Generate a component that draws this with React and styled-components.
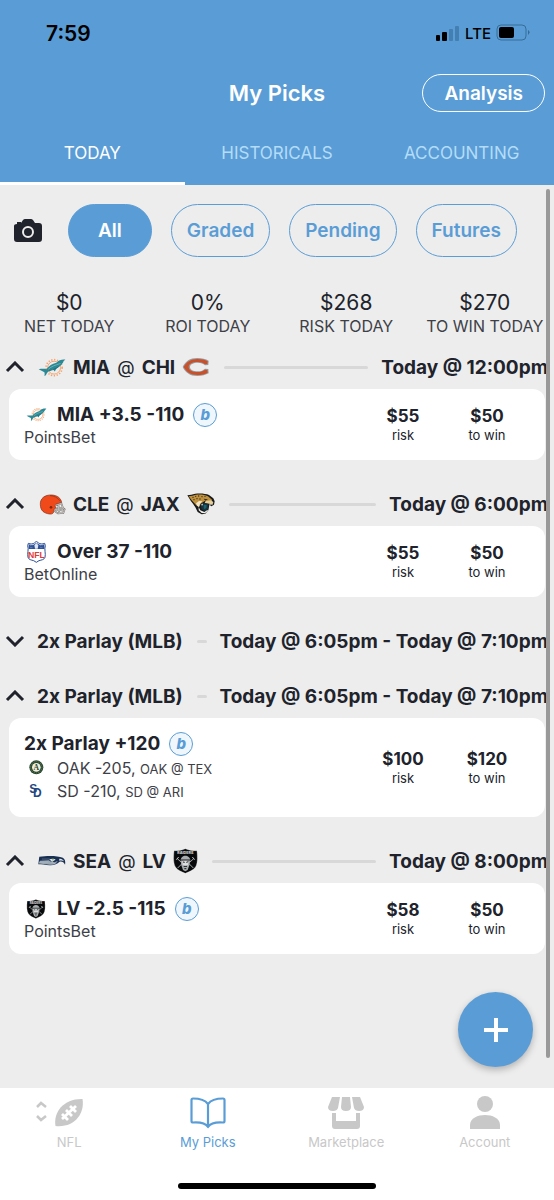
import { useState } from "react";
import styled, { createGlobalStyle, css } from "styled-components";

const GlobalStyle = createGlobalStyle`
  *, *::before, *::after {
    box-sizing: border-box;
  }

  body {
    margin: 0;
    background: #ededed;
    color: #20232b;
    font-family: Inter, "Liberation Sans", sans-serif;
  }

  button {
    font: inherit;
    color: inherit;
    background: none;
    border: 0;
    padding: 0;
    cursor: pointer;
  }

  svg {
    display: block;
    flex: none;
  }
`;

const blue = "#5a9dd6";

/* ---------- logos ---------- */

const Dolphins = ({ width = 28, height = 21 }) => (
  <svg width={width} height={height} viewBox="0 0 87 63" aria-hidden="true">
    <circle cx="50" cy="32" r="20" fill="none" stroke="#f3a26c" strokeWidth="3" />
    <circle cx="50" cy="32" r="25" fill="none" stroke="#f3a26c" strokeWidth="5" strokeDasharray="4 5" />
    <path d="M2 37c9-2 18-2 24 0 8-10 18-17 31-20 8-9 17-11 28-10-3 3-6 5-7 9-5 8-12 14-21 19l-5 9-5-6c-6 2-12 4-18 9-3 4-3 9-9 11 1-5 1-9 0-12-6-3-12-5-18-9z" fill="#2a8994" />
    <path d="M32 37c9-9 22-13 38-18" fill="none" stroke="#8fc8cc" strokeWidth="2" />
    <path d="M34 42c10-2 21-7 30-13" fill="none" stroke="#14606c" strokeWidth="2" />
  </svg>
);

const Bears = () => (
  <svg width="28" height="20" viewBox="0 0 84 60" aria-hidden="true">
    <path d="M2 30C10 13 24 3 46 3c14 0 25 3 34 8l-1 13-10 1c-5-5-12-8-21-8-15 0-24 5-24 13s9 13 24 13c9 0 16-3 21-8l10 1 1 13c-9 5-20 8-34 8C24 57 10 47 2 30z" fill="#999ba0" />
    <path d="M5 30C13 15 26 6 46 6c13 0 23 2 31 7l-1 8-7 1c-6-5-13-7-22-7-17 0-27 6-27 15s10 15 27 15c9 0 16-2 22-7l7 1 1 8c-8 5-18 7-31 7C26 54 13 45 5 30z" fill="#c8512a" />
  </svg>
);

const Browns = () => (
  <svg width="27" height="21" viewBox="0 0 81 63" aria-hidden="true">
    <path d="M4 31C3 13 18 2 38 3c18 1 28 10 30 23l-15 4c-5 2-5 7-3 12l-6 6c2 8-3 13-12 12C15 58 4 50 4 31z" fill="#f04a1b" stroke="#7b2a12" strokeWidth="2" />
    <path d="M33 5C45 5 56 11 62 20" fill="none" stroke="#8a3217" strokeWidth="2" />
    <circle cx="36" cy="40" r="4" fill="#7a2b15" />
    <path d="M50 34l17-6 5 14 5 4-4 11-16 1-12-8M52 42h20M58 32l3 26M48 46l26 4" fill="none" stroke="#6f6a68" strokeWidth="5" />
    <path d="M50 34l17-6 5 14 5 4-4 11-16 1-12-8M52 42h20M58 32l3 26M48 46l26 4" fill="none" stroke="#e8e5e2" strokeWidth="2" />
  </svg>
);

const Jaguars = () => (
  <svg width="28" height="22" viewBox="0 0 84 66" aria-hidden="true">
    <path d="M1 7l12-2C27 0 53 0 66 6l13 10 4 9-2 10-8 5-6-4-3 16-9 10-11 2-12-7-7-14-7-11L12 25z" fill="#18191c" />
    <path d="M5 10l11-2C30 3 50 3 63 10l12 10-4 7-18-3-12 8-5 10-9-6-13-14z" fill="#bf913c" />
    <path d="M27 31l9-7 10 1-7 7-3 10-6-4z" fill="#efe5c9" />
    <path d="M56 24l17-2 6 6-3 8-9-4-14-2z" fill="#e3cf9b" />
    <path d="M41 37l9-7 14 3-1 15-9 7-10-6z" fill="#16343e" />
    <path d="M50 35l9 1-1 9-7 4z" fill="#1b6473" />
    <path d="M35 42l5 10 12 5 9-6 2 2-9 8-10-1-9-8z" fill="#f4f1e8" />
    <path d="M43 33l2 6 3-7zM67 33l2 7 2-6z" fill="#fff" />
    <g fill="#3a2c18">
      <circle cx="18" cy="13" r="2" />
      <circle cx="26" cy="10" r="2" />
      <circle cx="35" cy="9" r="2" />
      <circle cx="45" cy="11" r="2" />
      <circle cx="54" cy="10" r="2" />
      <circle cx="30" cy="17" r="2" />
      <circle cx="39" cy="18" r="2" />
      <circle cx="21" cy="20" r="2" />
      <path d="M50 17l13 2-8 4z" />
    </g>
  </svg>
);

const Seahawks = () => (
  <svg width="28" height="12" viewBox="0 0 87 36" aria-hidden="true">
    <path d="M4 5C28 1 60 1 77 8c7 4 9 12 7 22-4-8-8-11-17-10-8 7-17 12-31 11C22 30 12 28 1 28z" fill="#192f52" />
    <path d="M6 17l28-1c6 6 13 10 24 8-7 6-18 7-28 5L2 26z" fill="#9aa8b4" />
    <path d="M4 22l28-1M12 12h23l8 4" fill="none" stroke="#c9d2d9" strokeWidth="1" />
    <path d="M35 13c8-4 16-2 20 0l-10 7zM66 11c7-1 11 2 15 8-5-3-9-3-15-2z" fill="#dfe5e8" />
    <path d="M43 12l7 1-4 4z" fill="#77b442" />
    <path d="M40 20l10 4 10-4" fill="none" stroke="#fff" strokeWidth="2" />
  </svg>
);

const Raiders = ({ width = 25, height = 26 }) => (
  <svg width={width} height={height} viewBox="0 0 75 78" aria-hidden="true">
    <path d="M3 8C14 8 27 7 37 2c11 5 23 6 35 6 2 23 2 39-5 50-7 9-18 13-30 18C25 71 14 67 8 58 1 47 1 31 3 8z" fill="#08090a" stroke="#f4f4f4" strokeWidth="1" />
    <text x="37" y="18" textAnchor="middle" fontFamily="Inter, sans-serif" fontSize="11" fontWeight="800" fill="#d9dadb">RAIDERS</text>
    <path d="M12 31l12 11M63 31L51 42M14 60l12-12M61 60L49 48" stroke="#a5a8aa" strokeWidth="3" />
    <path d="M10 35l7-8M65 35l-7-8" stroke="#c5c7c9" strokeWidth="3" />
    <path d="M23 38c0-10 7-15 14-15s15 5 15 15l-3 14-5 14-7 4-7-4-5-14z" fill="#a9acae" />
    <path d="M28 38c5-3 14-3 19 0l-2 13-8 4-8-4z" fill="#dcdddf" />
    <path d="M23 36h29M30 42l5 1M40 43l6-2M32 55h10M34 62h6" fill="none" stroke="#191a1b" strokeWidth="3" />
  </svg>
);

const Shield = () => (
  <svg width="19" height="22" viewBox="0 0 57 66" aria-hidden="true">
    <path d="M4 7c7 3 14 2 18-1l6-5 7 5c4 3 11 4 18 1l2 7c-4 10 2 24-1 35-2 7-11 8-18 10l-8 5-8-5c-7-2-15-3-17-10-3-11 3-25-1-35z" fill="#fff" stroke="#2c4f96" strokeWidth="3" />
    <path d="M5 10c8 3 14 2 18-1l5-4 6 4c5 3 11 4 18 1v14H5z" fill="#2b5097" />
    <path d="M28 6l6 7-2 10h-8l-2-10z" fill="#dfe8f4" />
    <path d="M10 14h7M40 14h7M9 20h9M39 20h9" stroke="#a9bbdc" strokeWidth="2" strokeDasharray="2 2" />
    <text x="28" y="50" textAnchor="middle" fontFamily="Liberation Sans, sans-serif" fontSize="26" fontWeight="700" fill="#e0393e">NFL</text>
  </svg>
);

const Athletics = () => (
  <svg width="15" height="15" viewBox="0 0 45 45" aria-hidden="true">
    <circle cx="22" cy="22" r="21" fill="#274632" />
    <circle cx="22" cy="22" r="17" fill="none" stroke="#6f8050" strokeWidth="3" strokeDasharray="3 3" />
    <circle cx="22" cy="22" r="13" fill="#f0edda" />
    <text x="22" y="30" textAnchor="middle" fontFamily="Liberation Serif, serif" fontSize="23" fontWeight="700" fill="#2a4630">A</text>
  </svg>
);

const Padres = () => (
  <svg width="16" height="18" viewBox="0 0 48 54" aria-hidden="true">
    <text x="4" y="34" fontFamily="Liberation Sans, sans-serif" fontSize="36" fontWeight="700" fill="#24477f">
      S<tspan dx="-13" dy="10">D</tspan>
    </text>
  </svg>
);

/* ---------- icons ---------- */

const Chevron = ({ down }) => (
  <svg width="20" height="12" viewBox="0 0 20 12" fill="none" stroke="#20232b" strokeWidth="3" aria-hidden="true">
    <path d={down ? "M2 2l8 8 8-8" : "M2 10l8-8 8 8"} />
  </svg>
);

const CameraIcon = () => (
  <svg width="28" height="24" viewBox="0 0 28 24" aria-hidden="true">
    <path d="M3 5V3h4v1l2-3q1-1 2-1h6q1 0 2 1l2 3h4q3 0 3 3v13q0 3-3 3H3q-3 0-3-3V7q0-2 3-2z" fill="#20232b" />
    <circle cx="14" cy="13" r="5" fill="none" stroke="#ededed" strokeWidth="2" />
  </svg>
);

const SignalIcon = () => (
  <svg width="24" height="16" viewBox="0 0 24 16" aria-hidden="true">
    <rect x="0" y="10" width="4" height="6" rx="1" />
    <rect x="6" y="7" width="5" height="9" rx="1" />
    <rect x="13" y="4" width="4" height="12" rx="1" fill="#437fb0" />
    <rect x="19" y="1" width="4" height="15" rx="1" fill="#437fb0" />
  </svg>
);

const BatteryIcon = () => (
  <svg width="34" height="18" viewBox="0 0 34 18" aria-hidden="true">
    <rect x="1" y="1" width="29" height="15" rx="4" fill="none" stroke="#376c99" />
    <rect x="3" y="3" width="15" height="11" rx="2" />
    <path d="M32 6q3 2 0 5z" fill="#376c99" />
  </svg>
);

const FootballIcon = () => (
  <svg width="66" height="30" viewBox="0 0 66 30" aria-hidden="true">
    <path d="M1 9l4-4 5 4M1 18l4 4 5-4" fill="none" stroke="#c8c8c8" strokeWidth="2.500" />
    <path d="M19.500 28C17 14 28 .500 46.500 1 49 16 38 30 19.500 28z" fill="#c8c8c8" />
    <path d="M26 21L40 8M26 16l6 6M30 12l6 6M34 8l6 6" stroke="#fff" strokeWidth="2.800" />
  </svg>
);

const BookIcon = () => (
  <svg width="36" height="32" viewBox="0 0 36 32" fill="none" stroke={blue} strokeWidth="2.200" strokeLinejoin="round" aria-hidden="true">
    <path d="M18 7C15 3 9 1.500 3 1.500q-1.500 0-1.500 1.500v21q0 1.500 1.500 1.500c7-.5 12 0 15 4.500 3-4.500 8-5 15-4.500q1.500 0 1.500-1.500V3q0-1.500-1.500-1.500C27 1.500 21 3 18 7zM18 7v23" />
  </svg>
);

const StoreIcon = () => (
  <svg width="36" height="34" viewBox="0 0 36 34" fill="#c8c8c8" aria-hidden="true">
    <path d="M4 1h8l-2 11q-1 3-5 3-5 0-5-4zM14 1h8l1 10q0 4-5 4t-5-4zM24 1h8l4 10q0 4-5 4-4 0-5-3z" />
    <path d="M4 17h4v8h20v-8h4v13q0 3-3 3H7q-3 0-3-3z" />
  </svg>
);

const AccountIcon = () => (
  <svg width="32" height="34" viewBox="0 0 32 34" fill="#c8c8c8" aria-hidden="true">
    <circle cx="16" cy="8" r="8" />
    <path d="M1 33v-4c0-7 8-10 15-10s15 3 15 10v4z" />
  </svg>
);

/* ---------- styles ---------- */

const Page = styled.div`
  display: flex;
  flex-direction: column;
  min-height: 100vh;
`;

const Header = styled.header`
  background: ${blue};
  color: #fff;
`;

const StatusBar = styled.div`
  display: flex;
  align-items: center;
  justify-content: space-between;
  height: 66px;
  padding: 0 24px 0 46px;
  color: #000;
`;

const Clock = styled.span`
  font-size: 21px;
  font-weight: 600;
`;

const StatusIcons = styled.div`
  display: flex;
  align-items: center;
  gap: 5px;
  font-size: 15px;
  font-weight: 500;
`;

const TitleBar = styled.div`
  display: grid;
  grid-template-columns: 1fr auto 1fr;
  align-items: center;
  height: 54px;
  padding: 0 9px;
`;

const Title = styled.h1`
  grid-column: 2;
  margin: 0;
  font-size: 22px;
  font-weight: 600;
`;

const AnalysisButton = styled.button`
  justify-self: end;
  height: 38px;
  padding: 0 21px;
  border: 1px solid #fff;
  border-radius: 19px;
  font-size: 19px;
  font-weight: 600;
`;

const Tabs = styled.nav`
  display: grid;
  grid-template-columns: repeat(3, 1fr);
`;

const Tab = styled.button`
  height: 65px;
  padding-top: 4px;
  border-bottom: 3px solid ${(props) => (props.$active ? "#fff" : "transparent")};
  color: ${(props) => (props.$active ? "#fff" : "#b4dcf8")};
  font-size: 17px;
`;

const Main = styled.main`
  position: relative;
  flex: 1;
`;

const Filters = styled.div`
  display: flex;
  align-items: center;
  gap: 19px;
  padding: 19px 14px 0;
`;

const CameraButton = styled.button`
  margin-right: 7px;
`;

const Pill = styled.button`
  height: 53px;
  padding: 0 15px;
  border: 1px solid ${blue};
  border-radius: 27px;
  color: ${blue};
  font-size: 19px;
  font-weight: 600;

  ${(props) => props.$active && css`
    padding: 0 29px;
    background: ${blue};
    color: #fff;
  `}
`;

const Stats = styled.dl`
  display: grid;
  grid-template-columns: repeat(4, 1fr);
  margin: 33px 0 9px;
  text-align: center;
`;

const Stat = styled.div`
  display: flex;
  flex-direction: column-reverse;
`;

const StatLabel = styled.dt`
  font-size: 16px;
  line-height: 20px;
  color: #3d4047;
  white-space: nowrap;
`;

const StatValue = styled.dd`
  margin: 0;
  font-size: 21px;
  line-height: 26px;
`;

const Group = styled.section`
  margin-bottom: ${(props) => (props.$open ? 22 : 11)}px;
`;

const GroupHeader = styled.button`
  display: flex;
  align-items: center;
  width: 100%;
  height: 44px;
  padding: 0 6px 0 5px;
  font-size: 19px;
  font-weight: 700;
  white-space: nowrap;
`;

const Matchup = styled.span`
  display: flex;
  align-items: center;
  gap: 7px;
  margin-left: ${(props) => (props.$plain ? 12 : 13)}px;
`;

const AwayLogo = styled.span`
  display: flex;
  justify-content: center;
  width: 28px;
`;

const At = styled.span`
  font-size: 18px;
  font-weight: 400;
`;

const Rule = styled.span`
  flex: 1;
  height: 3px;
  margin: 0 13px 0 14px;
  border-radius: 2px;
  background: #d8d8d8;
`;

const Card = styled.article`
  display: flex;
  align-items: center;
  margin: 0 9px;
  padding: 13px 16px 13px 15px;
  border-radius: 12px;
  background: #fff;
`;

const Bet = styled.div`
  flex: 1;
`;

const BetTitle = styled.h2`
  display: flex;
  align-items: center;
  gap: 9px;
  height: 25px;
  margin: 0;
  font-size: 19px;
  font-weight: 700;
`;

const LogoSlot = styled.span`
  display: flex;
  justify-content: center;
  width: 24px;
`;

const Badge = styled.span`
  display: flex;
  align-items: center;
  justify-content: center;
  width: 24px;
  height: 24px;
  border: 1px solid ${blue};
  border-radius: 50%;
  background: #eff7fd;
  color: ${blue};
  font-size: 15px;
  font-style: italic;
  font-weight: 800;
`;

const Book = styled.p`
  margin: 0;
  font-size: 16px;
  line-height: 20px;
  color: #3d4047;
`;

const Legs = styled.ul`
  margin: 0;
  padding: 0 0 2px;
  list-style: none;
`;

const Leg = styled.li`
  display: flex;
  align-items: center;
  gap: 9px;
  height: 23px;
  font-size: 16px;
  color: #3d4047;

  small {
    font-size: 13px;
  }
`;

const Amount = styled.div`
  width: 84px;
  text-align: center;
  font-size: 13px;
  line-height: 16px;

  strong {
    display: block;
    font-size: 17px;
    font-weight: 700;
    line-height: 21px;
  }
`;

const ScrollThumb = styled.div`
  position: absolute;
  top: 4px;
  right: 4px;
  bottom: 30px;
  width: 4px;
  border-radius: 2px;
  background: #999;
`;

const AddButton = styled.button`
  position: absolute;
  right: 21px;
  bottom: 21px;
  display: flex;
  align-items: center;
  justify-content: center;
  width: 75px;
  height: 75px;
  border-radius: 50%;
  background: ${blue};
  box-shadow: 0 3px 7px rgba(0, 0, 0, 0.25);
`;

const BottomBar = styled.footer`
  padding-bottom: 11px;
  background: #fff;
`;

const BottomNav = styled.nav`
  display: grid;
  grid-template-columns: repeat(4, 1fr);
`;

const NavLink = styled.a`
  display: flex;
  flex-direction: column;
  align-items: center;
  height: 95px;
  padding-top: 7px;
  color: ${(props) => (props.$active ? blue : "#c8c8c8")};
  font-size: 13px;
  text-decoration: none;
`;

const NavIcon = styled.span`
  display: flex;
  align-items: center;
  height: 36px;
  margin-bottom: 3px;
`;

const HomeIndicator = styled.div`
  width: 198px;
  height: 6px;
  margin: 0 auto;
  border-radius: 3px;
  background: #000;
`;

/* ---------- data ---------- */

const tabs = ["TODAY", "HISTORICALS", "ACCOUNTING"];
const filters = ["All", "Graded", "Pending", "Futures"];

const stats = [
  { label: "NET TODAY", value: "$0" },
  { label: "ROI TODAY", value: "0%" },
  { label: "RISK TODAY", value: "$268" },
  { label: "TO WIN TODAY", value: "$270" },
];

const initialGroups = [
  {
    away: "MIA", home: "CHI", awayLogo: <Dolphins />, homeLogo: <Bears />, time: "Today @ 12:00pm", open: true,
    bet: { title: "MIA +3.5 -110", logo: <Dolphins width={21} height={15} />, book: "PointsBet", badge: true, risk: "$55", win: "$50" },
  },
  {
    away: "CLE", home: "JAX", awayLogo: <Browns />, homeLogo: <Jaguars />, time: "Today @ 6:00pm", open: true,
    bet: { title: "Over 37 -110", logo: <Shield />, book: "BetOnline", risk: "$55", win: "$50" },
  },
  {
    name: "2x Parlay (MLB)", time: "Today @ 6:05pm - Today @ 7:10pm", open: false,
    bet: { title: "2x Parlay", legs: [], risk: "$0", win: "$0" },
  },
  {
    name: "2x Parlay (MLB)", time: "Today @ 6:05pm - Today @ 7:10pm", open: true,
    bet: {
      title: "2x Parlay +120", badge: true, risk: "$100", win: "$120",
      legs: [
        { logo: <Athletics />, pick: "OAK -205,", game: "OAK @ TEX" },
        { logo: <Padres />, pick: "SD -210,", game: "SD @ ARI" },
      ],
    },
  },
  {
    away: "SEA", home: "LV", awayLogo: <Seahawks />, homeLogo: <Raiders />, time: "Today @ 8:00pm", open: true,
    bet: { title: "LV -2.5 -115", logo: <Raiders width={20} height={20} />, book: "PointsBet", badge: true, risk: "$58", win: "$50" },
  },
];

const navItems = [
  { label: "NFL", icon: <FootballIcon /> },
  { label: "My Picks", icon: <BookIcon />, active: true },
  { label: "Marketplace", icon: <StoreIcon /> },
  { label: "Account", icon: <AccountIcon /> },
];

/* ---------- components ---------- */

const BetCard = ({ bet }) => (
  <Card>
    <Bet>
      <BetTitle>
        {bet.logo && <LogoSlot>{bet.logo}</LogoSlot>}
        {bet.title}
        {bet.badge && <Badge>b</Badge>}
      </BetTitle>
      {bet.book && <Book>{bet.book}</Book>}
      {bet.legs && (
        <Legs>
          {bet.legs.map((leg) => (
            <Leg key={leg.pick}>
              <LogoSlot>{leg.logo}</LogoSlot>
              <span>{leg.pick} <small>{leg.game}</small></span>
            </Leg>
          ))}
        </Legs>
      )}
    </Bet>
    <Amount><strong>{bet.risk}</strong>risk</Amount>
    <Amount><strong>{bet.win}</strong>to win</Amount>
  </Card>
);

const PickGroup = ({ group, onToggle }) => (
  <Group $open={group.open}>
    <GroupHeader onClick={onToggle} aria-expanded={group.open}>
      <Chevron down={!group.open} />
      <Matchup $plain={!!group.name}>
        {group.name ? group.name : (
          <>
            <AwayLogo>{group.awayLogo}</AwayLogo>
            <span>{group.away}</span>
            <At>@</At>
            <span>{group.home}</span>
            {group.homeLogo}
          </>
        )}
      </Matchup>
      <Rule />
      <span>{group.time}</span>
    </GroupHeader>
    {group.open && <BetCard bet={group.bet} />}
  </Group>
);

const App = () => {
  const [tab, setTab] = useState("TODAY");
  const [filter, setFilter] = useState("All");
  const [groups, setGroups] = useState(initialGroups);

  const toggle = (index) =>
    setGroups(groups.map((group, i) => (i === index ? { ...group, open: !group.open } : group)));

  return (
    <Page>
      <GlobalStyle />
      <Header>
        <StatusBar>
          <Clock>7:59</Clock>
          <StatusIcons>
            <SignalIcon />
            LTE
            <BatteryIcon />
          </StatusIcons>
        </StatusBar>
        <TitleBar>
          <Title>My Picks</Title>
          <AnalysisButton>Analysis</AnalysisButton>
        </TitleBar>
        <Tabs>
          {tabs.map((name) => (
            <Tab key={name} $active={name === tab} onClick={() => setTab(name)}>{name}</Tab>
          ))}
        </Tabs>
      </Header>
      <Main>
        <Filters>
          <CameraButton aria-label="Camera"><CameraIcon /></CameraButton>
          {filters.map((name) => (
            <Pill key={name} $active={name === filter} onClick={() => setFilter(name)}>{name}</Pill>
          ))}
        </Filters>
        <Stats>
          {stats.map((stat) => (
            <Stat key={stat.label}>
              <StatLabel>{stat.label}</StatLabel>
              <StatValue>{stat.value}</StatValue>
            </Stat>
          ))}
        </Stats>
        {groups.map((group, index) => (
          <PickGroup key={index} group={group} onToggle={() => toggle(index)} />
        ))}
        <ScrollThumb />
        <AddButton aria-label="Add pick">
          <svg width="24" height="24" viewBox="0 0 24 24" stroke="#fff" strokeWidth="4" aria-hidden="true">
            <path d="M12 0v24M0 12h24" />
          </svg>
        </AddButton>
      </Main>
      <BottomBar>
        <BottomNav>
          {navItems.map((item) => (
            <NavLink key={item.label} href="#" $active={item.active}>
              <NavIcon>{item.icon}</NavIcon>
              {item.label}
            </NavLink>
          ))}
        </BottomNav>
        <HomeIndicator />
      </BottomBar>
    </Page>
  );
};

export default App;
